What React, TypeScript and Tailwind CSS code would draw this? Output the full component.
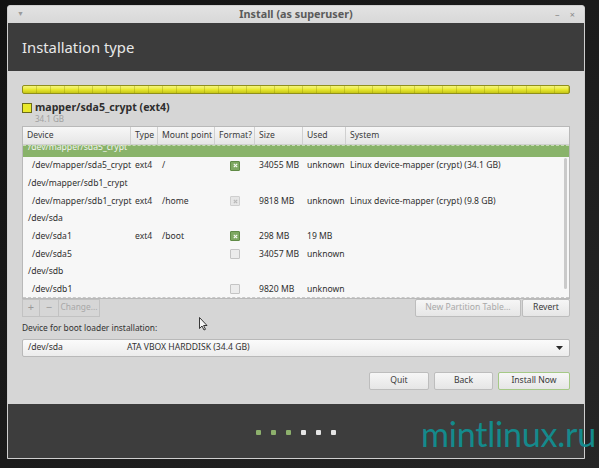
import React from "react";

const font = { fontFamily: '"Noto Sans", "Open Sans", sans-serif' };

type Row = {
  device: string;
  child?: boolean;
  type?: string;
  mount?: string;
  format?: "on" | "dim" | "off";
  size?: string;
  used?: string;
  system?: string;
  selected?: boolean;
};

const rows: Row[] = [
  { device: "/dev/mapper/sda5_crypt", selected: true },
  { device: "/dev/mapper/sda5_crypt", child: true, type: "ext4", mount: "/", format: "on", size: "34055 MB", used: "unknown", system: "Linux device-mapper (crypt) (34.1 GB)" },
  { device: "/dev/mapper/sdb1_crypt" },
  { device: "/dev/mapper/sdb1_crypt", child: true, type: "ext4", mount: "/home", format: "dim", size: "9818 MB", used: "unknown", system: "Linux device-mapper (crypt) (9.8 GB)" },
  { device: "/dev/sda" },
  { device: "/dev/sda1", child: true, type: "ext4", mount: "/boot", format: "on", size: "298 MB", used: "19 MB" },
  { device: "/dev/sda5", child: true, format: "off", size: "34057 MB", used: "unknown" },
  { device: "/dev/sdb" },
  { device: "/dev/sdb1", child: true, format: "off", size: "9820 MB", used: "unknown" },
];

const cols = "grid grid-cols-[108px_27px_57px_40px_48px_43px_1fr] whitespace-nowrap";

function Check({ state }: { state: "on" | "dim" | "off" }) {
  if (state === "off") {
    return <div className="w-[10px] h-[10px] rounded-[1px] border border-[#c4c4c4] bg-[#ececec]" />;
  }
  const on = state === "on";
  return (
    <div
      className={`w-[10px] h-[10px] rounded-[1px] border flex items-center justify-center ${
        on ? "border-[#5f8a45] bg-[#7ea862]" : "border-[#cfcfcf] bg-[#e6e6e6]"
      }`}
    >
      <svg width="5" height="5" viewBox="0 0 5 5">
        <path d="M0.8 0.8 L4.2 4.2 M4.2 0.8 L0.8 4.2" stroke={on ? "#f4f8ef" : "#b9b9b9"} strokeWidth="1.2" />
      </svg>
    </div>
  );
}

function Btn({ children, w, dim, green }: { children: React.ReactNode; w: string; dim?: boolean; green?: boolean }) {
  return (
    <div
      className={`${w} h-[18px] flex items-center justify-center rounded-[2px] border bg-gradient-to-b from-[#f6f6f6] to-[#e6e6e6] text-[8.6px] whitespace-nowrap ${
        green ? "border-[#a5c986]" : "border-[#bdbdbd]"
      } ${dim ? "text-[#a9a9a9]" : "text-[#3a3a3a]"}`}
    >
      {children}
    </div>
  );
}

export default function App() {
  return (
    <div className="relative w-[599px] h-[468px] overflow-hidden bg-gradient-to-br from-[#121212] via-[#1b1b1b] to-[#262626] pt-[5px] pl-[7px]" style={font}>
      <div className="w-[578px] h-[454px] flex flex-col border border-[#cfcfcf] bg-[#d6d6d6] rounded-t-[3px] overflow-hidden">
        {/* title bar */}
        <div className="h-[17px] flex items-center px-[9px] bg-gradient-to-b from-[#e2e2e2] to-[#d8d8d8] text-[#5a5a5a]">
          <span className="text-[7px] text-[#9a9a9a] w-[20px]">▼</span>
          <span className="flex-1 text-center text-[10.8px] font-bold">Install (as superuser)</span>
          <span className="w-[20px] flex justify-between text-[9px] text-[#8a8a8a]">
            <span>–</span>
            <span>×</span>
          </span>
        </div>

        {/* header */}
        <div className="h-[48px] bg-[#3c3c3c] flex items-center pl-[14px]">
          <span className="text-[14.8px] text-[#e8e8e8]">Installation type</span>
        </div>

        {/* content */}
        <div className="flex-1 px-[14px] pt-[14px] flex flex-col">
          <div className="h-[9px] rounded-[2px] border border-[#8f8f1c] bg-gradient-to-b from-[#f6f67a] via-[#e8e82e] to-[#c6c616] overflow-hidden">
            <div className="h-full bg-[repeating-linear-gradient(90deg,transparent_0px,transparent_13px,rgba(130,130,0,0.3)_13px,rgba(130,130,0,0.3)_14px)]" />
          </div>

          <div className="mt-[8px] flex items-start gap-[3px]">
            <div className="mt-[1px] w-[10px] h-[10px] border border-[#6a6a1a] bg-[#e8e82a]" />
            <div className="flex flex-col leading-none">
              <span className="text-[10.6px] font-bold text-[#2e2e2e]">mapper/sda5_crypt (ext4)</span>
              <span className="text-[8px] text-[#a0a0a0] mt-[2px]">34.1 GB</span>
            </div>
          </div>

          {/* table */}
          <div className="mt-[3px] h-[173px] border border-[#b9b9b9] bg-[#f7f7f7] flex flex-col text-[8.6px] text-[#2f2f2f]">
            <div className={`${cols} h-[18px] bg-gradient-to-b from-[#f7f7f7] to-[#e6e6e6] border-b border-[#cfcfcf] text-[#3a3a3a]`}>
              {["Device", "Type", "Mount point", "Format?", "Size", "Used", "System"].map((h, i) => (
                <div key={h} className={`flex items-center pl-[4px] ${i < 6 ? "border-r border-[#d0d0d0]" : ""}`}>
                  {h}
                </div>
              ))}
            </div>
            <div className="relative flex-1 overflow-hidden border-b border-dashed border-[#c8c8c8]">
              <div className="-mt-[5.5px]">
                {rows.map((r, i) => (
                  <div
                    key={i}
                    className={`${cols} h-[17.7px] items-center ${r.selected ? "bg-[#89b36a] text-[#f4f4f4]" : ""}`}
                  >
                    <div className={r.child ? "pl-[9px]" : "pl-[5px]"}>{r.device}</div>
                    <div className="pl-[4px]">{r.type}</div>
                    <div className="pl-[4px]">{r.mount}</div>
                    <div className="flex justify-center">{r.format && <Check state={r.format} />}</div>
                    <div className="pl-[4px]">{r.size}</div>
                    <div className="pl-[4px]">{r.used}</div>
                    <div className="pl-[4px]">{r.system}</div>
                  </div>
                ))}
              </div>
              <div className="absolute left-0 right-0 top-0 border-t border-dashed border-[#c6dcb3]" />
              <div className="absolute right-[2px] top-[13px] bottom-[8px] w-[3px] rounded-full bg-[#cacaca]" />
            </div>
          </div>

          {/* table buttons */}
          <div className="flex justify-between">
            <div className="flex">
              <div className="w-[18px] h-[18px] border border-[#c2c2c2] flex items-center justify-center text-[11px] text-[#9a9a9a]">+</div>
              <div className="w-[18px] h-[18px] border-y border-[#c2c2c2] flex items-center justify-center text-[11px] text-[#9a9a9a]">−</div>
              <div className="w-[42px] h-[18px] border border-[#c2c2c2] flex items-center justify-center text-[8.4px] text-[#a8a8a8]">Change...</div>
            </div>
            <div className="flex gap-[1px]">
              <Btn w="w-[106px]" dim>
                New Partition Table...
              </Btn>
              <Btn w="w-[48px]">Revert</Btn>
            </div>
          </div>

          <div className="mt-[5px] text-[8.4px] text-[#333] leading-[12px]">Device for boot loader installation:</div>

          <div className="mt-[5px] h-[18px] rounded-[2px] border border-[#b9b9b9] bg-gradient-to-b from-[#fbfbfb] to-[#ececec] flex items-center pl-[5px] pr-[6px] text-[8.6px] text-[#333]">
            <span className="w-[99px]">/dev/sda</span>
            <span className="flex-1">ATA VBOX HARDDISK (34.4 GB)</span>
            <svg width="7" height="4" viewBox="0 0 7 4">
              <path d="M0 0 L7 0 L3.5 4 Z" fill="#2a2a2a" />
            </svg>
          </div>

          <div className="mt-[15px] flex justify-end gap-[5px]">
            <Btn w="w-[60px]">Quit</Btn>
            <Btn w="w-[59px]">Back</Btn>
            <Btn w="w-[72px]" green>
              Install Now
            </Btn>
          </div>
        </div>

        {/* progress panel */}
        <div className="h-[54px] bg-[#3d3d3d] flex items-center justify-center gap-[10px] pt-[2px]">
          {[0, 1, 2, 3, 4, 5].map((d) => (
            <div key={d} className={`w-[5px] h-[5px] rounded-[1px] ${d < 3 ? "bg-[#8db06c]" : "bg-[#e4e4e4]"}`} />
          ))}
        </div>
      </div>

      {/* mouse pointer */}
      <svg className="absolute left-[199px] top-[317px]" width="9" height="14" viewBox="0 0 9 14">
        <path d="M0.5 0.5 L0.5 11.5 L3 9 L5 13 L6.5 12.3 L4.6 8.5 L8 8.5 Z" fill="#f5f5f5" stroke="#222" strokeWidth="0.9" />
      </svg>

      {/* watermark */}
      <div
        className="absolute left-[421px] top-[417px] text-[34px] leading-none text-[#148a8c] tracking-[-0.2px]"
        style={{ fontFamily: 'Lato, "Open Sans", sans-serif' }}
      >
        mintlinux.ru
      </div>
    </div>
  );
}
